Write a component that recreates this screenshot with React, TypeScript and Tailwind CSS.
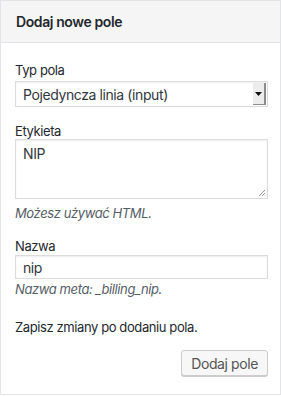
export default function App() {
  const font = { fontFamily: 'Inter, "Liberation Sans", Arial, sans-serif' };

  return (
    <div className="h-[397px] w-[281px] bg-white tracking-[-0.025em] text-[#23282d]" style={font}>
      <section className="border border-[#e2e4e7] bg-white">
        <header className="flex h-[42px] items-center border-b border-[#e2e4e7] bg-[#f5f5f5] px-[15px]">
          <h2 className="text-[14px] font-semibold text-[#23282d]">Dodaj nowe pole</h2>
        </header>

        <div className="pl-[14px] pr-[12px] pt-[20px] pb-[18px]">
          <label className="block text-[13px] leading-[15px]">Typ pola</label>
          <div className="mt-[3px] flex h-[26px] items-stretch border border-[#dcdcdc] bg-white shadow-[inset_0_1px_2px_rgba(0,0,0,0.07)]">
            <span className="flex flex-1 items-center pl-[7px] text-[14px] text-[#32373c]">
              Pojedyncza linia (input)
            </span>
            <span className="my-[1px] mr-[1px] flex w-[13px] items-center justify-center border-r-2 border-b border-[#8c8c8c] bg-[#ececec]">
              <svg width="7" height="4" viewBox="0 0 7 4">
                <path d="M0 0h7L3.5 4z" fill="#111" />
              </svg>
            </span>
          </div>

          <label className="mt-[17px] block text-[13px] leading-[15px]">Etykieta</label>
          <div className="relative h-[60px] border border-[#dcdcdc] bg-white shadow-[inset_0_1px_2px_rgba(0,0,0,0.07)]">
            <span className="block px-[7px] pt-[5px] text-[14px] leading-[18px] text-[#32373c]">NIP</span>
            <svg className="absolute right-[1px] bottom-[1px]" width="8" height="8" viewBox="0 0 8 8">
              <path d="M7 1L1 7M7 4L4 7M7 6.5L6.5 7" stroke="#888" strokeWidth="0.9" />
            </svg>
          </div>
          <p className="mt-[7px] text-[13px] italic leading-[15px] text-[#555d66]">Możesz używać HTML.</p>

          <label className="mt-[18px] block text-[13px] leading-[15px]">Nazwa</label>
          <div className="mt-[1px] flex h-[24px] items-center border border-[#dcdcdc] bg-white px-[7px] text-[14px] text-[#32373c] shadow-[inset_0_1px_2px_rgba(0,0,0,0.07)]">
            nip
          </div>
          <p className="mt-[3px] text-[13px] italic leading-[15px] text-[#555d66]">Nazwa meta: _billing_nip.</p>

          <p className="mt-[23px] text-[13px] leading-[15px]">Zapisz zmiany po dodaniu pola.</p>

          <div className="mt-[15px] flex justify-end">
            <button
              type="button"
              className="h-[26px] rounded-[3px] border border-[#cccccc] bg-[#f7f7f7] px-[9px] text-[14px] text-[#555555] shadow-[0_1px_0_#cccccc]"
            >
              Dodaj pole
            </button>
          </div>
        </div>
      </section>
    </div>
  );
}
